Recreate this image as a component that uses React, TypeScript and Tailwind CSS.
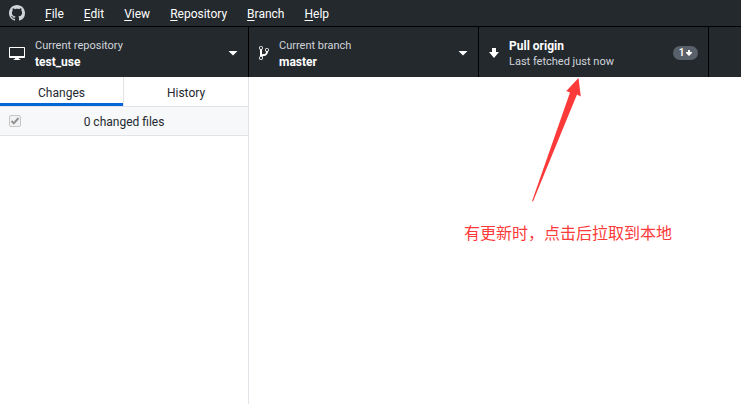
import type { ReactNode } from "react";

const menus = ["File", "Edit", "View", "Repository", "Branch", "Help"];

function Caret() {
  return (
    <svg className="h-[5px] w-[10px] shrink-0" viewBox="0 0 10 5" fill="#ffffff" aria-hidden="true">
      <path d="M0.5 0h9L5 4.5z" />
    </svg>
  );
}

function DesktopIcon() {
  return (
    <svg className="h-4 w-4 shrink-0" viewBox="0 0 16 16" fill="#ffffff" aria-hidden="true">
      <path d="M15 2H1c-.55 0-1 .45-1 1v9c0 .55.45 1 1 1h5.34c-.25.61-.86 1.39-2.34 2h8c-1.48-.61-2.09-1.39-2.34-2H15c.55 0 1-.45 1-1V3c0-.55-.45-1-1-1zm0 9H1V3h14v8z" />
    </svg>
  );
}

function BranchIcon() {
  return (
    <svg className="h-4 w-[10px] shrink-0" viewBox="0 0 10 16" fill="#ffffff" aria-hidden="true">
      <path d="M10 5c0-1.11-.89-2-2-2a1.993 1.993 0 0 0-1 3.72v.3c-.02.52-.23.98-.63 1.38-.4.4-.86.61-1.38.63-.83.02-1.48.16-2 .45V4.72a1.993 1.993 0 0 0-1-3.72C.88 1 0 1.89 0 3a2 2 0 0 0 1 1.72v6.56c-.59.35-1 .99-1 1.72 0 1.11.89 2 2 2 1.11 0 2-.89 2-2 0-.53-.2-1-.53-1.36.09-.06.48-.41.59-.47.25-.11.56-.17.94-.17 1.05-.05 1.95-.45 2.75-1.25S8.95 7.77 9 6.73h-.02C9.59 6.37 10 5.73 10 5zM2 1.8c.66 0 1.2.55 1.2 1.2 0 .65-.55 1.2-1.2 1.2C1.35 4.2.8 3.65.8 3c0-.65.55-1.2 1.2-1.2zm0 12.41c-.66 0-1.2-.55-1.2-1.2 0-.65.55-1.2 1.2-1.2.65 0 1.2.55 1.2 1.2 0 .65-.55 1.2-1.2 1.2zm6-8c-.66 0-1.2-.55-1.2-1.2 0-.65.55-1.2 1.2-1.2.65 0 1.2.55 1.2 1.2 0 .65-.55 1.2-1.2 1.2z" />
    </svg>
  );
}

function DownArrow({ className }: { className: string }) {
  return (
    <svg className={className} viewBox="0 3 10 10" fill="#ffffff" aria-hidden="true">
      <path d="M7 7V3H3v4H0l5 6 5-6H7z" />
    </svg>
  );
}

function ToolbarButton({
  width,
  icon,
  top,
  bottom,
  trailing,
}: {
  width: string;
  icon: ReactNode;
  top: ReactNode;
  bottom: ReactNode;
  trailing: ReactNode;
}) {
  return (
    <button
      type="button"
      className={`${width} flex shrink-0 items-center gap-2.5 border-r border-black pr-2.5 pt-0.5 text-left`}
    >
      {icon}
      <span className="flex min-w-0 flex-1 flex-col pt-px text-[11px] leading-4 text-[#d1d5da]">
        {top}
        {bottom}
      </span>
      {trailing}
    </button>
  );
}

export default function App() {
  return (
    <div className="flex min-h-screen flex-col bg-white font-['Roboto','Noto_Sans_CJK_SC',sans-serif] text-[#24292e]">
      <nav className="flex h-[27px] items-center border-b border-black bg-[#24292e] pl-[9px] text-xs text-white">
        <svg className="mr-2.5 h-4 w-4" viewBox="0 0 16 16" fill="#d1d5da" aria-hidden="true">
          <path d="M8 0C3.58 0 0 3.58 0 8c0 3.54 2.29 6.53 5.47 7.59.4.07.55-.17.55-.38 0-.19-.01-.82-.01-1.49-2.01.37-2.53-.49-2.69-.94-.09-.23-.48-.94-.82-1.13-.28-.15-.68-.52-.01-.53.63-.01 1.08.58 1.23.82.72 1.21 1.87.87 2.33.66.07-.52.28-.87.51-1.07-1.78-.2-3.64-.89-3.64-3.95 0-.87.31-1.59.82-2.15-.08-.2-.36-1.02.08-2.12 0 0 .67-.21 2.2.82.64-.18 1.32-.27 2-.27.68 0 1.36.09 2 .27 1.53-1.04 2.2-.82 2.2-.82.44 1.1.16 1.92.08 2.12.51.56.82 1.27.82 2.15 0 3.07-1.87 3.75-3.65 3.95.29.25.54.73.54 1.48 0 1.07-.01 1.93-.01 2.2 0 .21.15.46.55.38A8.013 8.013 0 0 0 16 8c0-4.42-3.58-8-8-8z" />
        </svg>
        {menus.map((name) => (
          <button key={name} type="button" className="px-2.5 pt-0.5 leading-4">
            <span className="underline underline-offset-2">{name[0]}</span>
            {name.slice(1)}
          </button>
        ))}
      </nav>

      <header className="flex h-[50px] bg-[#24292e]">
        <ToolbarButton
          width="w-[249px] pl-[9px]"
          icon={<DesktopIcon />}
          top={<span>Current repository</span>}
          bottom={<strong className="text-xs leading-4 font-bold text-white">test_use</strong>}
          trailing={<Caret />}
        />
        <ToolbarButton
          width="w-[230px] pl-2.5"
          icon={<BranchIcon />}
          top={<span>Current branch</span>}
          bottom={<strong className="text-xs leading-4 font-bold text-white">master</strong>}
          trailing={<Caret />}
        />
        <ToolbarButton
          width="w-[230px] pl-2.5"
          icon={<DownArrow className="h-[10px] w-[10px] shrink-0" />}
          top={<strong className="text-xs leading-4 font-bold text-white">Pull origin</strong>}
          bottom={<span>Last fetched just now</span>}
          trailing={
            <span className="flex h-[14px] w-[25px] items-center justify-center gap-0.5 rounded-full bg-[#586069] text-[10px] font-semibold leading-[14px] text-white">
              1
              <svg className="h-[6px] w-[6px]" viewBox="0 0 6 6" fill="#ffffff" aria-hidden="true">
                <path d="M2 0h2v2h2v1L3 6 0 3V2h2z" />
              </svg>
            </span>
          }
        />
      </header>

      <div className="flex flex-1">
        <aside className="w-[249px] shrink-0 border-r border-[#e1e4e8] text-xs">
          <div className="flex h-[30px] border-b border-[#e1e4e8]" role="tablist">
            <button
              type="button"
              role="tab"
              aria-selected="true"
              className="w-[123px] border-b-3 border-[#0366d6] pt-[5px]"
            >
              Changes
            </button>
            <button
              type="button"
              role="tab"
              aria-selected="false"
              className="flex-1 border-l border-[#e1e4e8] pt-0.5"
            >
              History
            </button>
          </div>
          <div className="flex h-[29px] items-center border-b border-[#e1e4e8] bg-[#f6f8fa] px-[9px]">
            <span className="grid h-3 w-3 shrink-0">
              <input
                id="all-files"
                type="checkbox"
                defaultChecked
                disabled
                className="col-start-1 row-start-1 h-3 w-3 appearance-none rounded-xs border border-[#c6c6c6] bg-[#f2f2f2]"
              />
              <svg
                className="pointer-events-none col-start-1 row-start-1 h-3 w-3"
                viewBox="0 0 12 12"
                fill="none"
                stroke="#929292"
                strokeWidth="2"
                aria-hidden="true"
              >
                <path d="M2.5 6l2.3 2.3L9.5 3" />
              </svg>
            </span>
            <label htmlFor="all-files" className="flex-1 pr-3 pt-0.5 text-center">
              0 changed files
            </label>
          </div>
        </aside>

        <main className="flex-1 pl-[215px]">
          <svg className="ml-[66px] h-[126px] w-[56px]" viewBox="0 0 56 126" fill="#fc3a3a" aria-hidden="true">
            <path d="M48.5 1L50.8 19.5L47 17.5L3 124.5L2 124.2L40 15.5L36.3 14Z" />
          </svg>
          <p className="mt-[17px] whitespace-nowrap font-['Noto_Sans_CJK_SC',sans-serif] text-base leading-6 text-[#fc3a3a]">
            有更新时，点击后拉取到本地
          </p>
        </main>
      </div>
    </div>
  );
}
